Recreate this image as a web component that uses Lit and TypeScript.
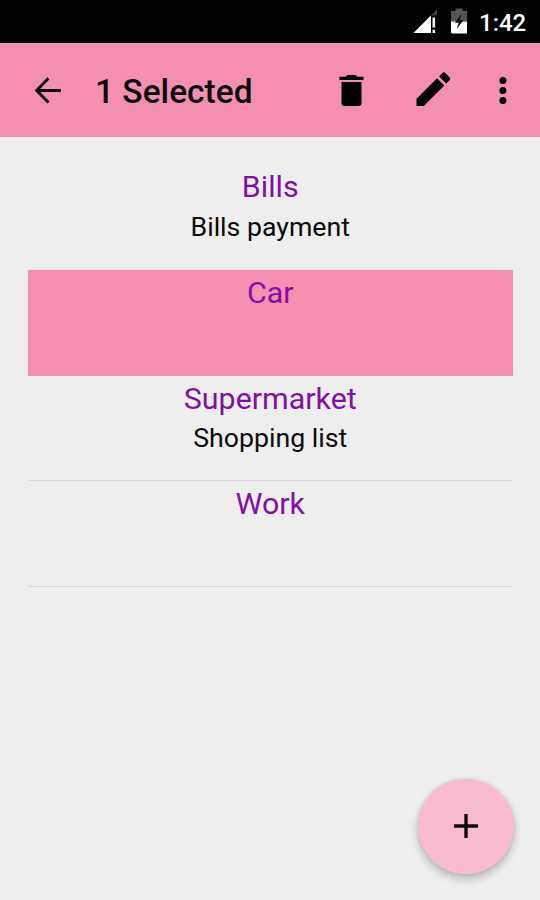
import { LitElement, html, css, nothing } from "lit";
import { customElement, state } from "lit/decorators.js";

interface Category {
  name: string;
  note?: string;
}

@customElement("app-root")
export class AppRoot extends LitElement {
  @state() private selected = 1;

  private items: Category[] = [
    { name: "Bills", note: "Bills payment" },
    { name: "Car" },
    { name: "Supermarket", note: "Shopping list" },
    { name: "Work" },
  ];

  static styles = css`
    :host {
      display: flex;
      flex-direction: column;
      position: relative;
      width: 540px;
      height: 900px;
      overflow: hidden;
      background: #eeeeee;
      color: #0b0b0b;
      font-family: Roboto, "Liberation Sans", sans-serif;
    }
    svg {
      display: block;
      flex: none;
    }
    .status {
      display: flex;
      justify-content: flex-end;
      height: 42.5px;
      flex: none;
      background: #000;
      color: #fff;
    }
    .clock {
      width: 47px;
      margin: 0 14px 0 10px;
      font-size: 24px;
      line-height: 47px;
      font-weight: 500;
      white-space: nowrap;
    }
    .bar {
      display: flex;
      align-items: center;
      height: 94.5px;
      flex: none;
      box-sizing: border-box;
      background: #f48fb1;
    }
    .title {
      flex: 1;
      margin-left: 21px;
      font-size: 33.5px;
      font-weight: 500;
      line-height: 40px;
      padding-top: 5px;
    }
    .list {
      padding: 27px 27px 0 27.5px;
    }
    .row {
      box-sizing: border-box;
      height: 105.75px;
      border-bottom: 1px solid #d6d6d6;
      text-align: center;
      padding-top: 5px;
    }
    .row.open {
      border-bottom-color: transparent;
    }
    .row.selected {
      background: #f48fb1;
      border-bottom: 1px solid #ec8fae;
    }
    .name {
      color: #8310a5;
      font-size: 30.4px;
      line-height: 36px;
    }
    .note {
      font-size: 26.7px;
      line-height: 32px;
      margin-top: 5.5px;
    }
    .fab {
      position: absolute;
      left: 418px;
      top: 778.5px;
      width: 95.5px;
      height: 95px;
      border-radius: 50%;
      background: #f8bbd0;
      box-shadow: 0 5px 8px rgba(0, 0, 0, 0.22), 0 0 4px rgba(0, 0, 0, 0.1);
      display: grid;
      place-items: center;
    }
  `;

  render() {
    return html`
      <div class="status">
        <svg width="58" height="42" viewBox="0 0 58 42">
          <path d="M26 9.5V33H2.500z" fill="#3c3c3c" />
          <path d="M20 15.500V33H2.500z" fill="#fff" />
          <path d="M20 15h6v18h-6z" fill="#000" />
          <path d="M20 15.500l6-6v6z" fill="#3c3c3c" />
          <path d="M21.500 17.500h2.600v10h-2.600zM21.500 29.800h2.600V33h-2.600z" fill="#f4f4f4" />
          <path d="M40 11h4.500V8.500h7V11H56v10.500H40z" fill="#555" />
          <path d="M40 21.500h16v12H41.500Q40 33.500 40 32z" fill="#fff" />
          <path d="M50.500 13.500l-6.500 9.200h3.600l-1.800 6.300 6.700-9h-3.600z" fill="#111" />
        </svg>
        <div class="clock">1:42</div>
      </div>
      <div class="bar">
        <svg width="74" height="94" viewBox="0 0 74 94">
          <path d="M61 47.500H37M48.500 35.200L36.600 47.500l11.900 12" fill="none" stroke="#0b0b0b" stroke-width="2.900" />
        </svg>
        <div class="title">1 Selected</div>
        <svg width="210" height="94" viewBox="330 43 210 94">
          <path d="M341.500 82h20v20.800q0 3.200-3.200 3.200h-13.600q-3.200 0-3.200-3.200zM339.500 76.800h6l2-1.800h8l2 1.800h6V80h-24z" />
          <path d="M416.500 98.800V106h7.200l20.600-20.600-7.200-7.200zM449.700 79.900q1.100-1.200 0-2.500l-4.600-4.600q-1.200-1-2.500 0l-3.500 3.600 7.100 7.100z" />
          <circle cx="502.900" cy="80.400" r="3.500" />
          <circle cx="502.900" cy="90.500" r="3.500" />
          <circle cx="502.900" cy="100.600" r="3.500" />
        </svg>
      </div>
      <div class="list">
        ${this.items.map(
          (item, i) => html`
            <div
              class="row ${i === this.selected ? "selected" : ""} ${i + 1 === this.selected ? "open" : ""}"
              @click=${() => (this.selected = i)}
            >
              <div class="name">${item.name}</div>
              ${item.note ? html`<div class="note">${item.note}</div>` : nothing}
            </div>
          `
        )}
      </div>
      <div class="fab">
        <svg width="24" height="24" viewBox="0 0 24 24">
          <path d="M12 0v24M0 12h24" stroke="#0b0b0b" stroke-width="3.400" />
        </svg>
      </div>
    `;
  }
}
